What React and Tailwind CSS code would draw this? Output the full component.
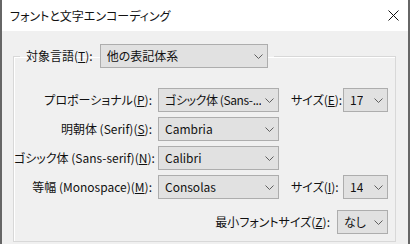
const font = { fontFamily: '"Noto Sans CJK JP", "Noto Sans", sans-serif' };

function Chevron() {
  return (
    <svg width="9" height="5" viewBox="0 0 9 5" className="shrink-0">
      <path d="M0.5 0.5 L4.5 4.5 L8.5 0.5" fill="none" stroke="#5f5f5f" strokeWidth="1" />
    </svg>
  );
}

function Select({ value, width, tight }) {
  return (
    <div
      className={`flex h-[24px] items-center justify-between border border-[#adadad] bg-[#e1e1e1] pl-[6px] pr-[4px] ${width}`}
    >
      <span className={`overflow-hidden whitespace-nowrap ${tight ? "tracking-[-0.4px]" : ""}`}>{value}</span>
      <Chevron />
    </div>
  );
}

function Label({ text, k, after, width }) {
  return (
    <span className={`whitespace-nowrap text-right ${width}`}>
      {text}(<u>{k}</u>){after}
    </span>
  );
}

export default function App() {
  return (
    <div
      className="flex h-[244px] w-[410px] flex-col overflow-hidden border-x-2 border-[#666666] bg-[#f0f0f0] text-[12px] text-[#111] [font-feature-settings:'palt']"
      style={font}
    >
      {/* title bar */}
      <div className="flex h-[31px] shrink-0 items-center justify-between bg-white pl-[8px] pr-[9px]">
        <span>フォントと文字エンコーディング</span>
        <svg width="11" height="11" viewBox="0 0 11 11">
          <path d="M0.5 0.5 L10.5 10.5 M10.5 0.5 L0.5 10.5" stroke="#111" strokeWidth="1" />
        </svg>
      </div>

      {/* group box */}
      <fieldset className="ml-[11px] mt-[13px] h-[198px] w-[383px] border border-[#d8d8d8] shadow-[inset_1px_1px_0_#ffffff]">
        <legend className="ml-[6px] flex items-center px-[6px]">
          <span className="mr-[7px]">
            対象言語(<u>T</u>):
          </span>
          <Select value="他の表記体系" width="w-[168px]" />
        </legend>

        <div className="mt-[20px] flex flex-col gap-[5px]">
          <div className="flex items-center">
            <Label text="プロポーショナル" k="P" after=":" width="w-[138px]" />
            <div className="ml-[6px]">
              <Select value="ゴシック体 (Sans-..." width="w-[121px]" tight />
            </div>
            <Label text="サイズ" k="E" after=":" width="ml-[12px] w-[44px]" />
            <div className="ml-[8px]">
              <Select value="17" width="w-[45px]" />
            </div>
          </div>
          <div className="flex items-center">
            <Label text="明朝体 (Serif)" k="S" after=":" width="w-[138px]" />
            <div className="ml-[6px]">
              <Select value="Cambria" width="w-[121px]" />
            </div>
          </div>
          <div className="flex items-center">
            <Label text="ゴシック体 (Sans-serif)" k="N" after=":" width="w-[138px]" />
            <div className="ml-[6px]">
              <Select value="Calibri" width="w-[121px]" />
            </div>
          </div>
          <div className="flex items-center">
            <Label text="等幅 (Monospace)" k="M" after=":" width="w-[138px]" />
            <div className="ml-[6px]">
              <Select value="Consolas" width="w-[121px]" />
            </div>
            <Label text="サイズ" k="I" after=":" width="ml-[12px] w-[44px]" />
            <div className="ml-[8px]">
              <Select value="14" width="w-[45px]" />
            </div>
          </div>
          <div className="mt-[6px] flex items-center justify-end pr-[7px]">
            <Label text="最小フォントサイズ" k="Z" after=":" width="" />
            <div className="ml-[7px]">
              <Select value="なし" width="w-[51px]" />
            </div>
          </div>
        </div>
      </fieldset>
    </div>
  );
}
